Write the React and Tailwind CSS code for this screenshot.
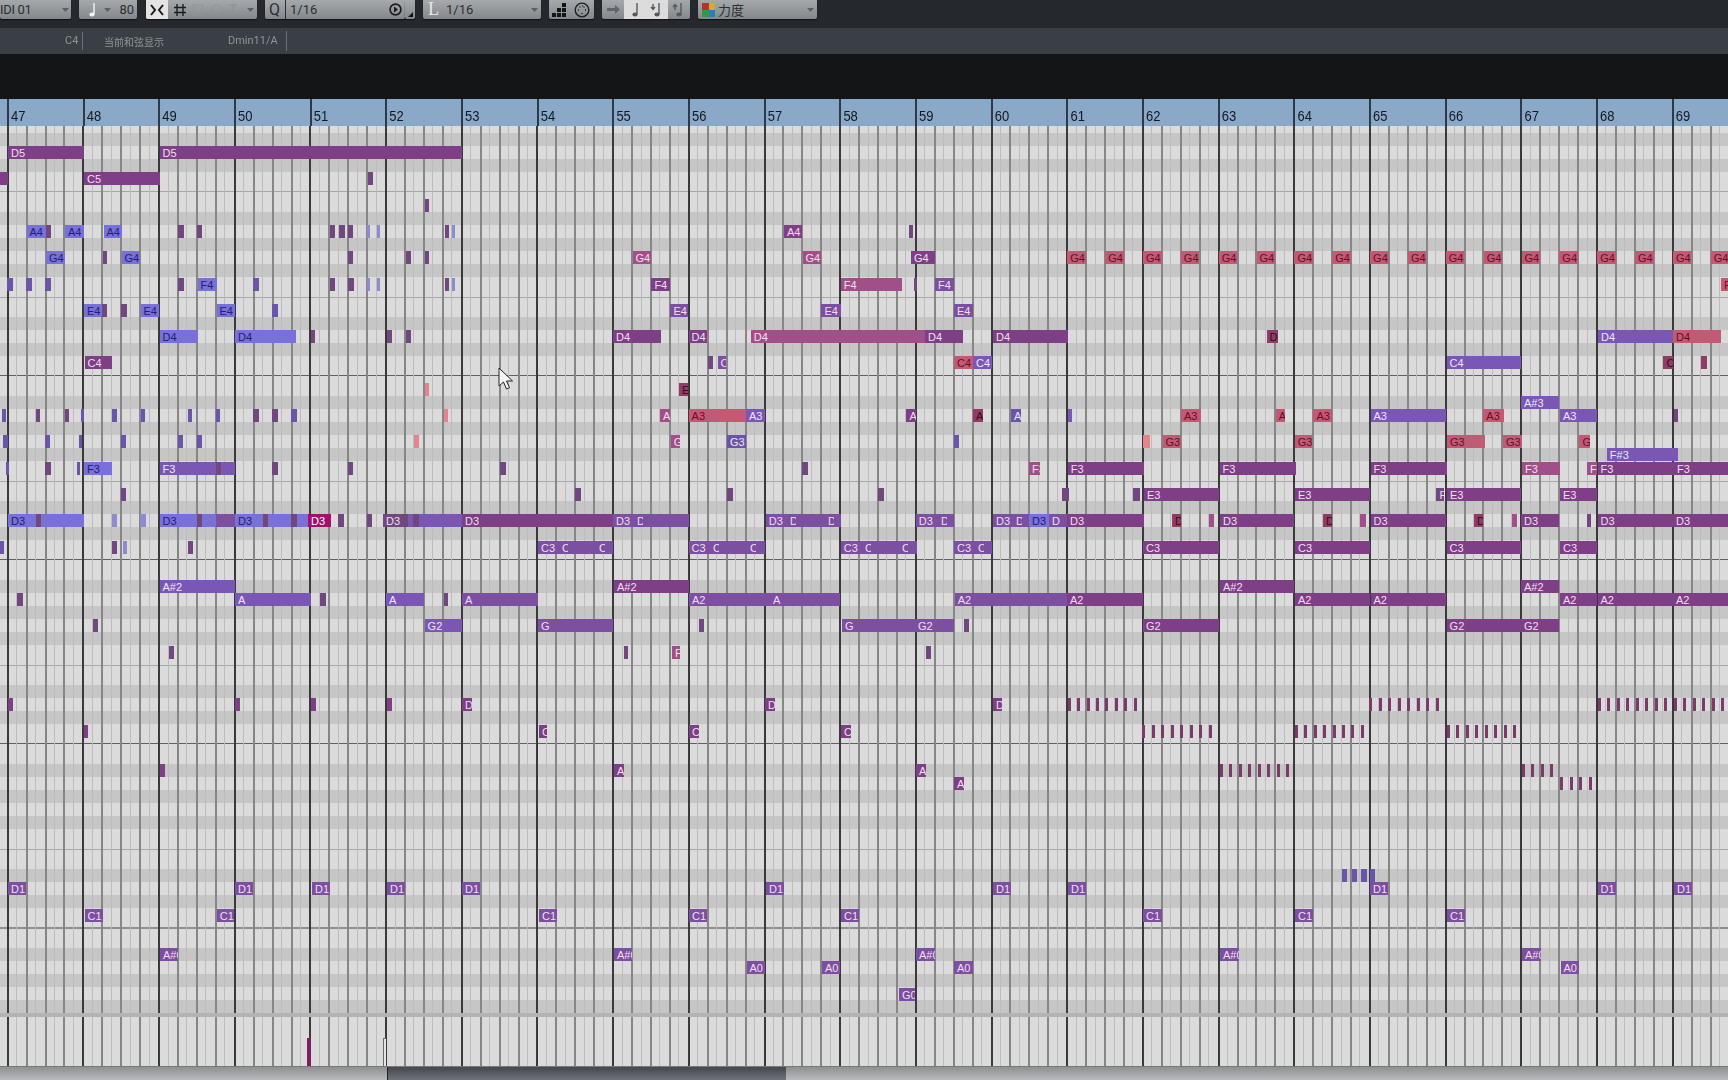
const X0 = 7.7;
const STEP = 9.46;
const ROW = 13.15;
const TOP_R = 146 - 126;

const NOTE_STYLE = {
  P: "bg-[#7e3f86] text-[#f2dff2]",
  V: "bg-[#7a57b4] text-[#efe6fa]",
  B: "bg-[#7a70da] text-[#1d1f70]",
  M: "bg-[#a04f88] text-[#f5e0ee]",
  R: "bg-[#c25a76] text-[#6a0c20]",
  L: "bg-[#e3848f] text-[#7a1525]",
  S: "bg-[#8f8bd0] text-[#1d1f70]",
  H: "bg-[#a0106c] text-white",
  D: "bg-[#8f3d66] text-[#3a0a20]",
  Q: "bg-[#70487f] text-[#f2dff2]",
  W: "bg-[#6b55a8] text-[#efe6fa]",
  T: "bg-[#7a3a6a] text-white",
  G: "bg-[#7d4fa0] text-[#f2dff2]",
  N: "bg-transparent text-[#f2dff2]",
};

// [x1, x2, row, label, colour]
const notes = [
  [8, 83.7, 0, "D5", "P"], [159.5, 462, 0, "D5", "P"],
  [0, 8, 2, "", "P"], [84, 159.5, 2, "C5", "P"], [368, 373, 2, "", "Q"],
  [425, 429, 4, "", "Q"],
  [26.5, 46, 6, "A4", "B"], [46, 51, 6, "", "Q"], [65, 84, 6, "A4", "B"], [103.5, 122, 6, "A4", "B"], [178, 184, 6, "", "Q"], [197, 202, 6, "", "Q"], [330, 335, 6, "", "Q"], [339, 345, 6, "", "Q"], [348, 353, 6, "", "Q"], [367, 369, 6, "", "S"], [377, 380, 6, "", "S"], [445, 449, 6, "", "Q"], [452, 455, 6, "", "S"], [784, 802, 6, "A4", "P"], [909, 913, 6, "", "Q"],
  [46, 65, 8, "G4", "B"], [103, 107, 8, "", "Q"], [121.5, 140, 8, "G4", "B"], [348, 353, 8, "", "Q"], [406, 411, 8, "", "Q"], [425, 429, 8, "", "Q"], [632.5, 651.4, 8, "G4", "M"], [802.5, 821.4, 8, "G4", "M"], [911, 934.6, 8, "G4", "P"],
  [7, 13, 10, "", "W"], [26, 32, 10, "", "W"], [45, 51, 10, "", "W"], [178, 184, 10, "", "Q"], [197.5, 216.5, 10, "F4", "B"], [253, 259, 10, "", "W"], [330, 335, 10, "", "Q"], [348, 354, 10, "", "Q"], [367, 369, 10, "", "S"], [377, 380, 10, "", "S"], [445, 449, 10, "", "Q"], [452, 455, 10, "", "S"], [651.4, 670.4, 10, "F4", "P"], [840.7, 902, 10, "F4", "M"], [914, 917, 10, "", "Q"], [935, 954, 10, "F4", "G"], [1721, 1728, 10, "F4", "R"],
  [84, 102, 12, "E4", "B"], [102, 107, 12, "", "Q"], [121, 127, 12, "", "Q"], [140.5, 159, 12, "E4", "B"], [216.5, 235, 12, "E4", "B"], [272, 278, 12, "", "W"], [670.4, 688, 12, "E4", "G"], [821.4, 840.7, 12, "E4", "G"], [954, 973, 12, "E4", "G"],
  [159.5, 197.5, 14, "D4", "B"], [235, 296, 14, "D4", "B"], [311, 315, 14, "", "Q"], [387, 391.5, 14, "", "Q"], [406, 411, 14, "", "Q"], [613, 661, 14, "D4", "P"], [688.6, 707.5, 14, "D4", "P"], [750.7, 963, 14, "D4", "M"], [925, 963, 14, "D4", "P"], [993, 1067.6, 14, "D4", "P"], [1266.5, 1277.6, 14, "D", "D"], [1598, 1673, 14, "D4", "V"], [1673, 1720.5, 14, "D4", "R"],
  [84.5, 112, 16, "C4", "P"], [707.5, 713, 16, "", "Q"], [717.5, 726.4, 16, "C4", "G"], [954, 973, 16, "C4", "R"], [973, 992, 16, "C4", "V"], [1446.6, 1521, 16, "C4", "V"], [1663.4, 1673, 16, "C4", "D"], [1701, 1706.6, 16, "", "D"],
  [425, 429, 18, "", "L"], [679, 688, 18, "E3", "D"],
  [1521, 1559, 19, "A#3", "V"],
  [2, 6, 20, "", "W"], [36, 40, 20, "", "Q"], [65, 69, 20, "", "Q"], [81, 84, 20, "", "W"], [112, 117, 20, "", "W"], [141, 145, 20, "", "W"], [188, 192, 20, "", "W"], [216, 220, 20, "", "W"], [253, 259, 20, "", "Q"], [272, 278, 20, "", "Q"], [291, 297, 20, "", "W"], [444, 448, 20, "", "L"],
  [660, 670, 20, "A3", "M"], [688.6, 746, 20, "A3", "R"], [746, 764.6, 20, "A3", "V"], [906.4, 915.7, 20, "A3", "P"], [973, 982.5, 20, "A3", "D"], [1011, 1020.5, 20, "A3", "W"], [1067.8, 1072.4, 20, "", "V"], [1181, 1201, 20, "A3", "R"], [1275.8, 1285.5, 20, "A3", "R"], [1313.4, 1332, 20, "A3", "R"], [1370.5, 1445.7, 20, "A3", "V"], [1483.3, 1503.7, 20, "A3", "R"], [1560, 1596.6, 20, "A3", "V"], [1673.6, 1678, 20, "", "Q"],
  [3, 8, 22, "", "W"], [45, 50, 22, "", "W"], [79, 82, 22, "", "W"], [121, 126, 22, "", "W"], [178, 183, 22, "", "W"], [197, 202, 22, "", "W"], [414, 419, 22, "", "L"], [670.7, 680, 22, "G3", "M"], [727, 746, 22, "G3", "W"], [954, 959, 22, "", "W"], [1143, 1149.5, 22, "", "L"], [1162.5, 1181, 22, "G3", "R"], [1294.8, 1312.4, 22, "G3", "R"], [1447, 1485, 22, "G3", "R"], [1503, 1522, 22, "G3", "R"], [1579.4, 1589.6, 22, "G3", "R"],
  [1606.8, 1677.8, 23, "F#3", "V"],
  [6, 9, 24, "", "W"], [45, 51, 24, "", "Q"], [77, 80, 24, "", "W"], [84, 112, 24, "F3", "B"], [159.5, 235, 24, "F3", "V"], [216, 221, 24, "", "Q"], [272, 278, 24, "", "Q"], [348, 353, 24, "", "Q"], [499.6, 505.7, 24, "", "Q"], [802, 808, 24, "", "Q"], [1029, 1039.5, 24, "F3", "M"], [1067.8, 1144, 24, "F3", "P"], [1219.6, 1295.7, 24, "F3", "P"], [1370.5, 1446.6, 24, "F3", "P"], [1522, 1560, 24, "F3", "M"], [1587, 1596.6, 24, "F3", "M"], [1597.5, 1674, 24, "F3", "P"], [1674, 1728, 24, "F3", "P"],
  [121, 126, 26, "", "Q"], [575, 581, 26, "", "Q"], [727, 732.5, 26, "", "Q"], [878, 884, 26, "", "Q"], [1062, 1068.7, 26, "", "Q"], [1132.8, 1140, 26, "", "Q"], [1144, 1219, 26, "E3", "P"], [1295, 1370, 26, "E3", "P"], [1436.4, 1444, 26, "F3", "Q"], [1447, 1521, 26, "E3", "P"], [1560, 1596.6, 26, "E3", "P"],
  [8, 84, 28, "D3", "B"], [36, 41, 28, "", "Q"], [112, 117, 28, "", "S"], [140, 146, 28, "", "S"], [159.5, 216, 28, "D3", "B"], [197, 202, 28, "", "Q"], [216, 235, 28, "", "G"], [235, 308, 28, "D3", "B"], [263, 268, 28, "", "Q"], [291, 297, 28, "", "Q"], [308, 331, 28, "D3", "H"], [338, 344, 28, "", "Q"], [367, 372, 28, "", "Q"], [383, 408, 28, "D3", "Q"], [408, 462, 28, "", "V"], [413, 419, 28, "", "Q"], [462, 613, 28, "D3", "P"], [613, 689, 28, "D3", "G"], [765.7, 840.7, 28, "D3", "G"], [915.7, 953.6, 28, "D3", "G"], [993, 1029, 28, "D3", "G"], [1029, 1049, 28, "D3", "B"], [1049, 1067, 28, "D", "G"], [1067, 1144, 28, "D3", "P"], [1172, 1181, 28, "D", "D"], [1209, 1214, 28, "", "M"], [1220, 1294, 28, "D3", "P"], [1323, 1332, 28, "D", "D"], [1360, 1366, 28, "", "M"], [1370.5, 1446, 28, "D3", "P"], [1474, 1483, 28, "D", "D"], [1512, 1517, 28, "", "M"], [1521, 1559, 28, "D3", "P"], [1587, 1591, 28, "", "Q"], [1597.5, 1673, 28, "D3", "P"], [1673, 1728, 28, "D3", "P"],
  [634, 643, 28, "D3", "N"], [787, 796, 28, "D3", "N"], [825, 834, 28, "D3", "N"], [938, 947, 28, "D3", "N"], [1013, 1022, 28, "D3", "N"],
  [0, 4, 30, "", "W"], [112, 117, 30, "", "Q"], [123, 127, 30, "", "S"], [188, 193, 30, "", "Q"], [538, 613, 30, "C3", "G"], [688.6, 765, 30, "C3", "G"], [840.7, 916.8, 30, "C3", "G"], [954, 992, 30, "C3", "G"], [1143, 1219, 30, "C3", "P"], [1295, 1370, 30, "C3", "P"], [1446.6, 1521, 30, "C3", "P"], [1560, 1597, 30, "C3", "P"],
  [559, 568, 30, "C3", "N"], [596, 605, 30, "C3", "N"], [710, 719, 30, "C3", "N"], [747, 756, 30, "C3", "N"], [862, 871, 30, "C3", "N"], [899, 908, 30, "C3", "N"], [975, 984, 30, "C3", "N"],
  [159.5, 235, 33, "A#2", "V"], [614, 689, 33, "A#2", "P"], [1220, 1294, 33, "A#2", "P"], [1521, 1559, 33, "A#2", "P"],
  [17, 23, 34, "", "Q"], [235, 311, 34, "A", "V"], [320, 326, 34, "", "Q"], [386, 424, 34, "A", "V"], [444, 448, 34, "", "Q"], [462, 538, 34, "A", "G"], [689, 770, 34, "A2", "G"], [770, 840, 34, "A", "G"], [954.7, 1067, 34, "A2", "G"], [1067, 1143, 34, "A2", "P"], [1295, 1370, 34, "A2", "P"], [1370.5, 1446, 34, "A2", "P"], [1560, 1597, 34, "A2", "P"], [1597.5, 1673, 34, "A2", "P"], [1673, 1728, 34, "A2", "P"],
  [93, 98, 36, "", "Q"], [424.6, 462, 36, "G2", "V"], [538, 613, 36, "G", "G"], [699, 704, 36, "", "Q"], [842, 915, 36, "G", "G"], [915, 954, 36, "G2", "G"], [964, 969, 36, "", "Q"], [1143, 1219, 36, "G2", "P"], [1446.6, 1521, 36, "G2", "P"], [1521, 1559, 36, "G2", "P"],
  [169, 174, 38, "", "Q"], [624, 628, 38, "", "Q"], [672, 680, 38, "F", "M"], [926, 931, 38, "", "Q"],
  [8, 13, 42, "", "P"], [235, 240, 42, "", "P"], [311, 315.5, 42, "", "P"], [387, 392, 42, "", "P"], [462, 472, 42, "D2", "P"], [765, 774.5, 42, "D2", "P"], [993, 1002, 42, "D2", "P"],
  [84, 88, 44, "", "P"], [539, 547, 44, "C2", "P"], [689, 699, 44, "C2", "P"], [841, 851, 44, "C2", "P"],
  [160, 164.5, 47, "", "P"], [614, 624, 47, "A", "P"], [916, 926, 47, "A", "P"], [954, 964, 48, "A", "P"],
  [1341.7, 1347, 55, "", "W"], [1351.7, 1357, 55, "", "W"], [1360.5, 1366.6, 55, "", "W"], [1370, 1375, 55, "", "W"],
  [8, 26, 56, "D1", "G"], [235, 253, 56, "D1", "G"], [312, 330, 56, "D1", "G"], [387, 405, 56, "D1", "G"], [462, 480, 56, "D1", "G"], [766, 784, 56, "D1", "G"], [993, 1011, 56, "D1", "G"], [1068, 1086, 56, "D1", "G"], [1370, 1388, 56, "D1", "G"], [1597.5, 1616, 56, "D1", "G"], [1674, 1692, 56, "D1", "G"],
  [84.5, 102.5, 58, "C1", "G"], [216.7, 234, 58, "C1", "G"], [539, 557, 58, "C1", "G"], [689, 707, 58, "C1", "G"], [841, 859, 58, "C1", "G"], [1143, 1162, 58, "C1", "G"], [1295, 1313, 58, "C1", "G"], [1447, 1465, 58, "C1", "G"],
  [160, 178, 61, "A#0", "G"], [614, 632, 61, "A#0", "G"], [916, 935, 61, "A#0", "G"], [1220, 1239, 61, "A#0", "G"], [1522, 1540.5, 61, "A#0", "G"],
  [746.5, 765, 62, "A0", "G"], [822, 840, 62, "A0", "G"], [954, 973, 62, "A0", "G"], [1560.5, 1579, 62, "A0", "G"],
  [899, 915, 64, "G0", "G"],
];

// repeated notes: the G4 riff and the short tick runs
for (let i = 0; i < 18; i++) notes.push([1067.3 + i * 37.85, 1085.8 + i * 37.85, 8, "G4", "R"]);
const ticks = [
  [1067.6, 42, 8], [1369.4, 42, 8], [1598, 42, 14],
  [1142.4, 44, 8], [1294.7, 44, 8], [1447, 44, 8],
  [1220, 47, 8], [1521.7, 47, 4], [1560.4, 48, 4],
];
ticks.forEach(([x, r, n]) => {
  for (let i = 0; i < n; i++) notes.push([x + i * 9.46, x + i * 9.46 + 2, r, "", "T"]);
});

const rows = [];
for (let r = -1; r <= 65; r++) rows.push(r);

const lines = [];
for (let i = 0; i < 182; i++) lines.push(i);

function rowClass(r) {
  const m = ((r % 14) + 14) % 14;
  if (m === 1 || m === 5 || m === 7 || m === 9 || m === 13) return "bg-[#c6c6c6]";
  return "bg-[#dcdbdc]";
}

function rowLine(r) {
  if (r === 3) return "h-px bg-[#a6a6a8]";
  if (r === 59) return "h-[2px] bg-[#8e8e90]";
  const m = ((r % 14) + 14) % 14;
  if (m === 3) return "h-px bg-[#606064]";
  if (m === 11) return "h-px bg-[#a8a8aa]";
  return "";
}

function GridLines() {
  return lines.map((i) => {
    const cls =
      i % 8 === 0
        ? "w-[2px] bg-[#3a3a3a]"
        : i % 2 === 0
          ? "w-[2px] bg-[#868686]"
          : "w-px bg-[#bcbcbc]";
    return <div key={i} className={`absolute top-0 bottom-0 ${cls}`} style={{ left: X0 + i * STEP - 1 }} />;
  });
}

function Caret() {
  return (
    <svg width="7" height="4" viewBox="0 0 7 4" className="shrink-0">
      <path d="M0 0h7L3.5 4z" fill="#5c6064" />
    </svg>
  );
}

function NoteGlyph({ light, arrow }) {
  const c = light ? "#f4f4f4" : "#55595d";
  return (
    <svg width="16" height="16" viewBox="0 0 16 16">
      <path d="M10 1v11" stroke={c} strokeWidth="1.4" />
      <ellipse cx="8" cy="12.5" rx="2.6" ry="2" fill={c} />
      {arrow === "down" && <path d="M4 2v5M2 5l2 2.4L6 5" stroke={c} strokeWidth="1.4" fill="none" />}
      {arrow === "up" && <path d="M4 8V3M2 5l2-2.4L6 5" stroke={c} strokeWidth="1.4" fill="none" />}
    </svg>
  );
}

function Toolbar() {
  const btn = "h-[19px] bg-linear-to-b from-[#a6a9ac] to-[#84888c] flex items-center rounded-b-[2px] shadow-[0_1px_1px_#111]";
  return (
    <div className="h-[28px] bg-[#25282c] flex items-start text-[13px] text-[#2c2e31] font-['Roboto',sans-serif]">
      <div className={`${btn} w-[71px] justify-between pr-[2px]`}>
        <span className="tracking-tight">IDI 01</span>
        <Caret />
      </div>
      <div className={`${btn} w-[58px] ml-[8px] pl-[5px] pr-[3px]`}>
        <NoteGlyph light />
        <span className="ml-[4px]"><Caret /></span>
        <span className="ml-auto">80</span>
      </div>
      <div className={`${btn} w-[111px] ml-[9px]`}>
        <div className="w-[22px] h-full bg-[#e4e4e4] flex items-center justify-center rounded-bl-[2px]">
          <svg width="14" height="12" viewBox="0 0 14 12">
            <path d="M1 1l4 5-4 5M13 1L9 6l4 5" stroke="#1a1a1a" strokeWidth="2" fill="none" />
          </svg>
        </div>
        <svg width="14" height="14" viewBox="0 0 14 14" className="ml-[5px]">
          <path d="M4 1v12M10 1v12M1 4.5h12M1 9.5h12" stroke="#1d1d1d" strokeWidth="1.4" />
        </svg>
        <svg width="52" height="14" viewBox="0 0 52 14" className="ml-[4px]">
          <rect x="2" y="2" width="10" height="10" fill="none" stroke="#8f9397" />
          <circle cx="26" cy="7" r="5" fill="none" stroke="#8f9397" />
          <path d="M38 2h8M42 2v10" stroke="#8f9397" strokeWidth="1.5" />
        </svg>
        <span className="ml-auto mr-[3px]"><Caret /></span>
      </div>
      <div className={`${btn} w-[140px] ml-[8px] pl-[4px] pr-[3px]`}>
        <span className="text-[16px] w-[17px] border-r border-[#2c2e31] leading-[19px]">Q</span>
        <span className="ml-[4px]">1/16</span>
        <svg width="13" height="13" viewBox="0 0 13 13" className="ml-auto">
          <circle cx="6.5" cy="6.5" r="5.4" fill="none" stroke="#1b1b1b" strokeWidth="1.6" />
          <path d="M5 3.5l4 3-4 3z" fill="#1b1b1b" />
        </svg>
      </div>
      <div className={`${btn} w-[10px] items-end justify-end pb-[2px] pr-[2px]`}>
        <svg width="5" height="5" viewBox="0 0 5 5"><path d="M5 0v5H0z" fill="#111" /></svg>
      </div>
      <div className={`${btn} w-[118px] ml-[8px] pl-[5px] pr-[3px]`}>
        <span className="text-[18px] text-[#e8e8e8] w-[17px] font-['Liberation_Serif',serif] leading-[19px]">L</span>
        <span className="ml-[1px]">1/16</span>
        <span className="ml-auto"><Caret /></span>
      </div>
      <div className={`${btn} w-[45px] ml-[8px] pl-[3px] gap-[7px]`}>
        <svg width="15" height="15" viewBox="0 0 15 15">
          <path d="M0 11h4v4H0zM5 11h4v4H5zM10 11h4v4h-4zM5 6h4v4H5zM10 6h4v4h-4zM10 1h4v4h-4z" fill="#141414" />
        </svg>
        <svg width="16" height="16" viewBox="0 0 16 16">
          <circle cx="8" cy="8" r="6.8" fill="none" stroke="#1b1b1b" strokeWidth="1.3" />
          <path d="M4 8h1M11 8h1M5.5 5h1M9.5 5h1M8 4h.8M8 11v1" stroke="#1b1b1b" strokeWidth="1.4" />
        </svg>
      </div>
      <div className={`${btn} w-[88px] ml-[8px]`}>
        <div className="w-[22px] flex justify-center">
          <svg width="15" height="13" viewBox="0 0 15 13">
            <path d="M1 5h8V2l5 4.500L9 11V8H1z" fill="#62666a" />
          </svg>
        </div>
        <div className="w-[44px] h-full bg-[#dcdcdc] flex items-center justify-around">
          <NoteGlyph />
          <NoteGlyph arrow="down" />
        </div>
        <div className="w-[22px] flex justify-center">
          <NoteGlyph arrow="up" />
        </div>
      </div>
      <div className={`${btn} w-[119px] ml-[8px] pl-[4px] pr-[3px]`}>
        <div className="grid grid-cols-2 w-[13px] h-[14px] shrink-0">
          <span className="bg-[#b8312f]" />
          <span className="bg-[#e2a22b]" />
          <span className="bg-[#2f9a4c]" />
          <span className="bg-[#2f78c4]" />
        </div>
        <span className="ml-[3px] font-['Noto_Sans_CJK_SC',sans-serif] text-[13px]">力度</span>
        <span className="ml-auto"><Caret /></span>
      </div>
    </div>
  );
}

function InfoBar() {
  return (
    <div className="h-[26px] bg-[#3a3e45] flex items-center text-[11px] text-[#8f9499] font-['Roboto',sans-serif] blur-[0.3px]">
      <span className="ml-[65px] w-[17px]">C4</span>
      <span className="h-[18px] w-px bg-[#6c7077]" />
      <span className="ml-[21px] w-[124px] text-[10px] font-['Noto_Sans_CJK_SC',sans-serif]">当前和弦显示</span>
      <span className="w-[58px]">Dmin11/A</span>
      <span className="h-[20px] w-px bg-[#6c7077]" />
    </div>
  );
}

function Ruler() {
  const bars = [];
  for (let b = 47; b <= 69; b++) bars.push(b);
  return (
    <div className="h-[27px] bg-[#8aa9c9] flex pl-[7px] overflow-hidden">
      {bars.map((b) => (
        <div key={b} className="w-[75.68px] shrink-0 border-l-2 border-[#2c3a4a] flex items-end pl-[2px] pb-[2px]">
          <span className="text-[13px] leading-[15px] text-[#121820] font-['Liberation_Sans',sans-serif] scale-y-110 origin-bottom">{b}</span>
        </div>
      ))}
    </div>
  );
}

function Roll() {
  return (
    <div className="relative h-[887px] overflow-hidden">
      <div className="h-[6.85px] bg-[#dcdbdc]" />
      {rows.map((r) => {
        const line = rowLine(r);
        return (
          <div key={r} className={`h-[13.15px] flex items-center ${rowClass(r)}`}>
            {line && <div className={`w-full ${line}`} />}
          </div>
        );
      })}
      <GridLines />
      {notes.map(([x1, x2, r, label, c], i) => (
        <div
          key={i}
          className={`absolute h-[13px] overflow-hidden whitespace-nowrap pl-[3px] text-[11px] leading-[14px] font-['Liberation_Sans',sans-serif] ${NOTE_STYLE[c]}`}
          style={{ left: x1, width: x2 - x1, top: TOP_R + r * ROW }}
        >
          {label}
        </div>
      ))}
      <svg width="16" height="24" viewBox="0 0 16 24" className="absolute left-[498px] top-[241px]">
        <path d="M1 1v18l4.500-4 3 7 3-1.300-3-6.700h6z" fill="#f5f5f5" stroke="#222" strokeWidth="1" />
      </svg>
    </div>
  );
}

function Lane() {
  return (
    <div className="relative h-[49px] bg-[#dcdbdc] overflow-hidden">
      <GridLines />
      <div className="absolute left-[307px] bottom-0 w-[4px] h-[28px] bg-[#7a2060]" />
      <div className="absolute left-[383px] bottom-0 w-[3px] h-[28px] border-l border-t border-[#6c6c6c] bg-[#e4e4e4]" />
    </div>
  );
}

function ScrollBar() {
  return (
    <div className="h-[14px] flex bg-linear-to-b from-[#8e9094] to-[#b9babc] border-t border-[#77797d]">
      <div className="w-[387px]" />
      <div className="w-[399px] bg-linear-to-b from-[#43474e] to-[#70747a] border-l border-[#222]" />
    </div>
  );
}

export default function App() {
  return (
    <div className="w-[1728px] h-[1080px] overflow-hidden bg-[#131516]">
      <Toolbar />
      <InfoBar />
      <div className="h-[45px] bg-[#131516]" />
      <Ruler />
      <Roll />
      <div className="h-[4px] bg-[#b4b2b8]" />
      <Lane />
      <ScrollBar />
    </div>
  );
}
